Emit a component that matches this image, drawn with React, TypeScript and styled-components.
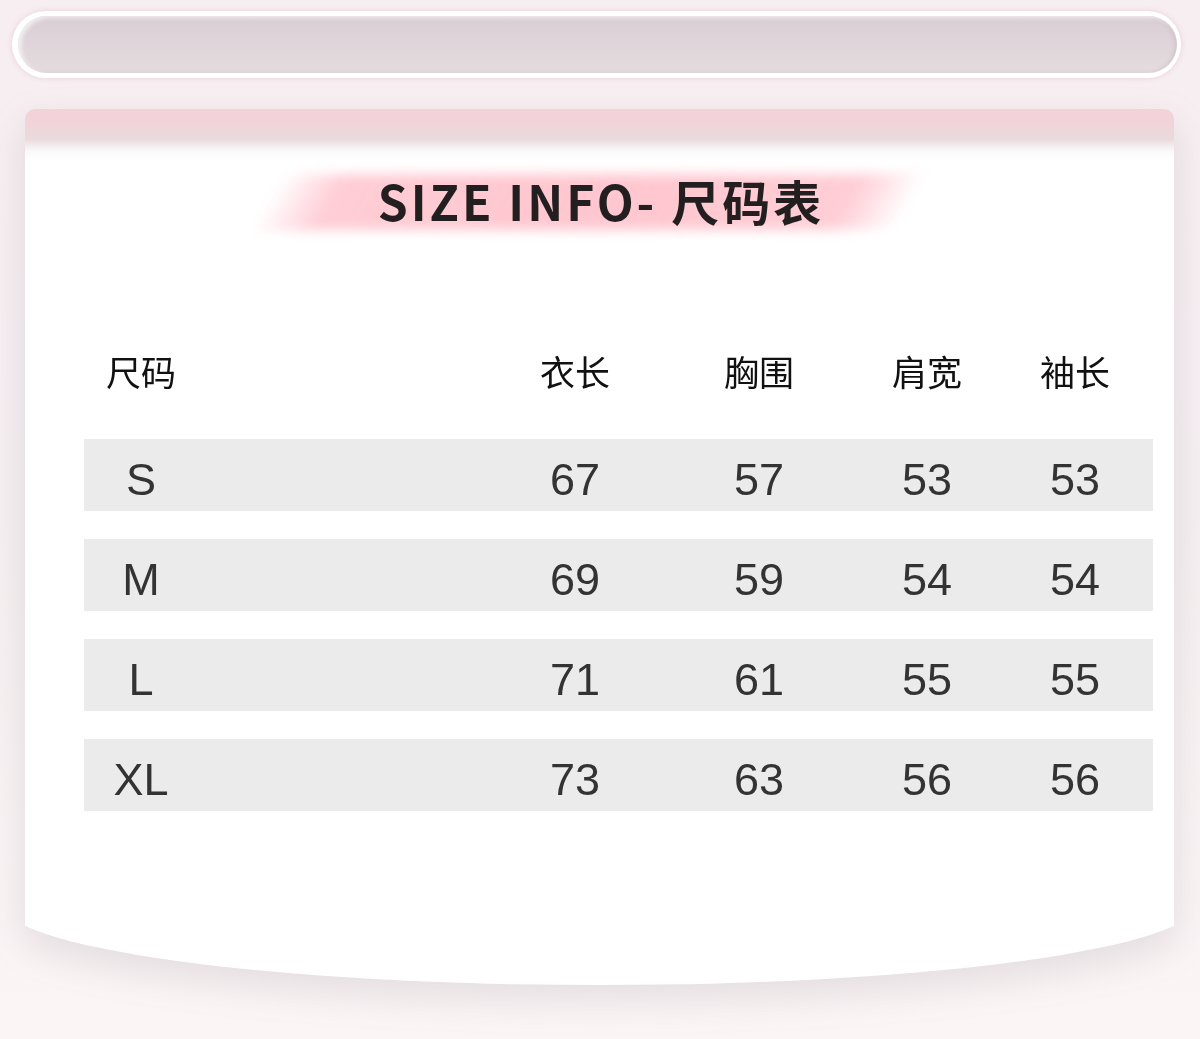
import styled, { createGlobalStyle } from "styled-components";

const GlobalStyle = createGlobalStyle`
	html, body {
		margin: 0;
		padding: 0;
		background: #f7eff2;
	}
	body {
		font-family: "Liberation Sans", "Noto Sans CJK SC", sans-serif;
	}
`;

const headers = ["尺码", "衣长", "胸围", "肩宽", "袖长"];

const rows = [
	{ size: "S", values: [67, 57, 53, 53] },
	{ size: "M", values: [69, 59, 54, 54] },
	{ size: "L", values: [71, 61, 55, 55] },
	{ size: "XL", values: [73, 63, 56, 56] },
];

const App = () => {
	return (
		<Page>
			<GlobalStyle />
			<SearchPill>
				<PillInner />
			</SearchPill>

			<CardWrap>
				<CardBody>
					<TitleRow>
						<Title>SIZE INFO- 尺码表</Title>
					</TitleRow>

					<Table>
						<HeadRow>
							{headers.map((h, i) => (
								<HeadCell key={h} $first={i === 0}>
									{h}
								</HeadCell>
							))}
						</HeadRow>

						{rows.map((row) => (
							<DataRow key={row.size}>
								<DataCell $first>{row.size}</DataCell>
								{row.values.map((v, i) => (
									<DataCell key={i}>{v}</DataCell>
								))}
							</DataRow>
						))}
					</Table>
				</CardBody>
				<CardCurve />
			</CardWrap>
		</Page>
	);
};

const Page = styled.div`
	width: 1200px;
	height: 1039px;
	box-sizing: border-box;
	padding-top: 11px;
	display: flex;
	flex-direction: column;
	overflow: hidden;
	background: linear-gradient(180deg, #f7eef1 0%, #f5eff1 50%, #fbf5f6 100%);
`;

const SearchPill = styled.div`
	margin: 0 19px 0 12px;
	height: 67px;
	box-sizing: border-box;
	border-radius: 999px;
	background: #fff;
	padding: 5px 4px 5px 6px;
	box-shadow: 0 0 4px 1px rgba(236, 212, 222, 0.9);
`;

const PillInner = styled.div`
	height: 100%;
	border-radius: 999px;
	background: linear-gradient(180deg, #d8cdd3 0%, #dfd5da 50%, #e5dcdf 100%);
	box-shadow: inset 3px 2px 4px rgba(255, 255, 255, 0.7),
		inset -2px 0 4px rgba(160, 140, 150, 0.25);
`;

const CardWrap = styled.div`
	margin: 31px 26px 0 25px;
	display: flex;
	flex-direction: column;
	filter: drop-shadow(0 14px 18px rgba(120, 100, 110, 0.16));
`;

const CardBody = styled.div`
	height: 793px;
	border-radius: 10px 10px 0 0;
	background: linear-gradient(
		180deg,
		#f4d2d8 0px,
		#f1d4d8 14px,
		#e8dbdd 30px,
		#fbf9f9 42px,
		#ffffff 50px
	);
	display: flex;
	flex-direction: column;
	align-items: center;
	padding-top: 63px;
	box-sizing: border-box;
`;

const CardCurve = styled.div`
	height: 83px;
	background: #fff;
	clip-path: ellipse(600px 83px at 50% 0);
`;

const TitleRow = styled.div`
	height: 60px;
	display: flex;
	align-items: center;
	justify-content: center;
	width: 100%;
`;

const Title = styled.h1`
	position: relative;
	margin: -5px 0 0;
	font-family: "Noto Sans CJK SC", "Noto Sans", sans-serif;
	font-weight: 700;
	font-size: 48px;
	letter-spacing: 3px;
	color: #231f20;
	line-height: 60px;
	padding-left: 3px;
	z-index: 0;

	&::before {
		content: "";
		position: absolute;
		top: 4px;
		bottom: 0;
		left: -108px;
		right: -86px;
		transform: skewX(-30deg);
		background: linear-gradient(
			90deg,
			rgba(255, 196, 206, 0) 0%,
			rgba(255, 200, 209, 0.9) 10%,
			#ffc6cf 50%,
			rgba(255, 200, 209, 0.9) 90%,
			rgba(255, 196, 206, 0) 100%
		);
		filter: blur(6px);
		z-index: -1;
	}
`;

const Table = styled.div`
	width: 100%;
	box-sizing: border-box;
	padding: 0 21px 0 59px;
	margin-top: 105px;
	display: flex;
	flex-direction: column;
	gap: 28px;
`;

const gridCols = `399px 184px 184px 152px 144px`;

const HeadRow = styled.div`
	display: grid;
	grid-template-columns: ${gridCols};
	align-items: center;
	height: 72px;
	margin-bottom: 2px;
`;

const HeadCell = styled.div<{ $first?: boolean }>`
	font-family: "Noto Sans CJK SC", sans-serif;
	font-size: 35px;
	color: #111;
	text-align: center;
	width: ${({ $first }) => ($first ? "114px" : "auto")};
	margin-top: -6px;
`;

const DataRow = styled.div`
	display: grid;
	grid-template-columns: ${gridCols};
	align-items: center;
	height: 72px;
	background: #ebebeb;
`;

const DataCell = styled.div<{ $first?: boolean }>`
	font-family: "Liberation Sans", Arial, sans-serif;
	font-size: 45px;
	color: #333;
	text-align: center;
	width: ${({ $first }) => ($first ? "114px" : "auto")};
	padding-top: 9px;
`;

export default App;
